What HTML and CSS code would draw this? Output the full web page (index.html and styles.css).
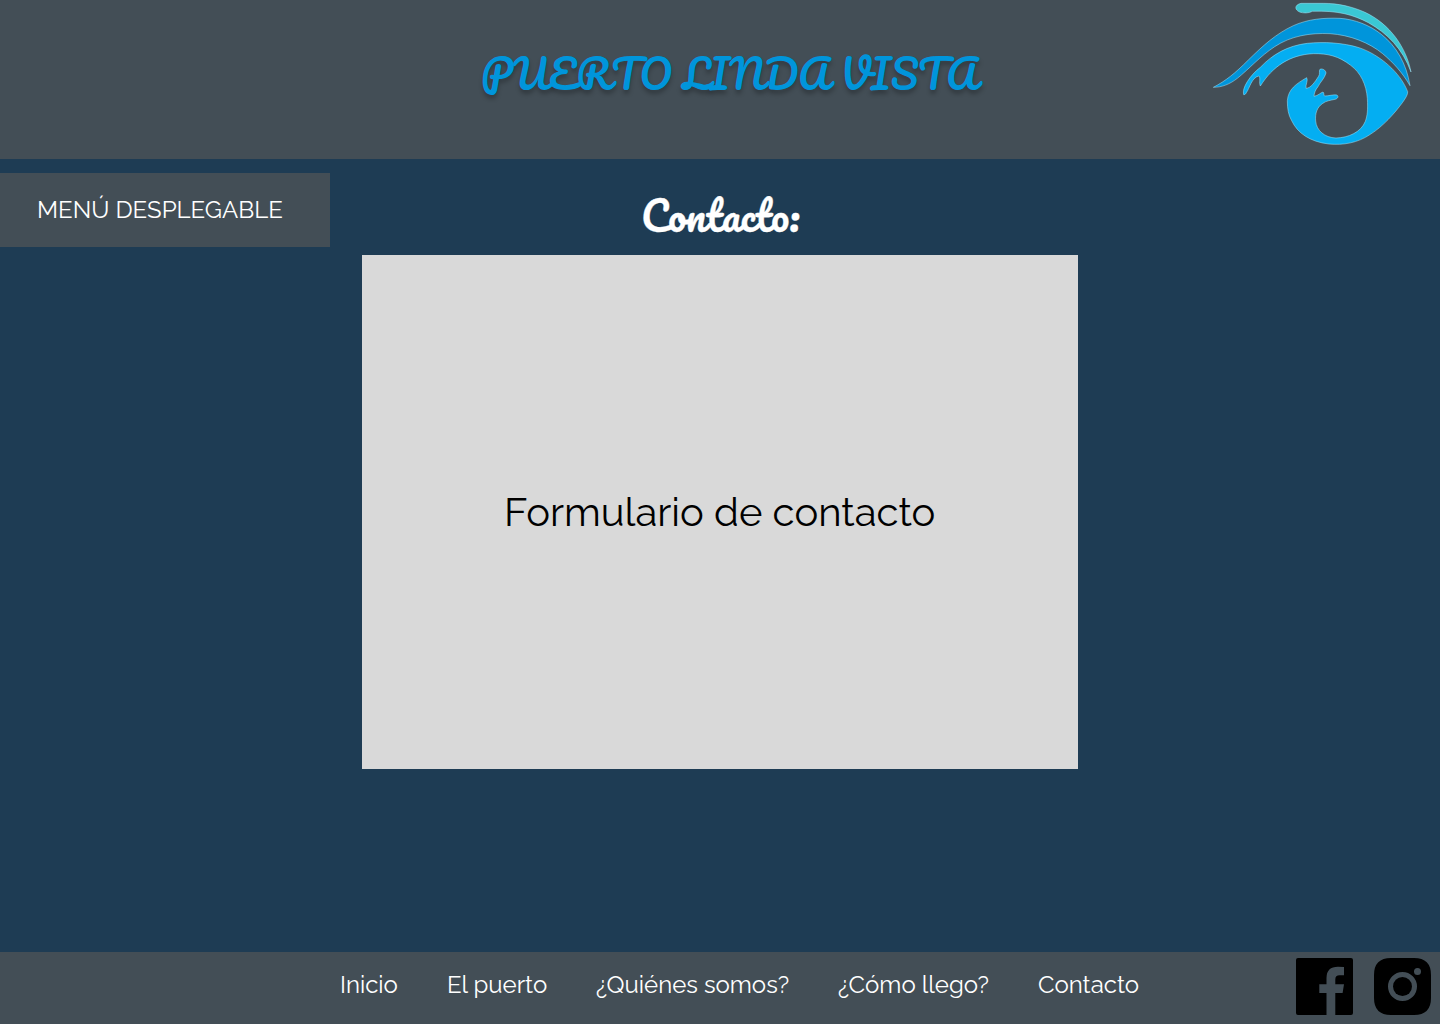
FILE: index.html
```html
<!DOCTYPE html>
<html lang="es">
<head>
<meta charset="utf-8">
<title>Puerto Linda Vista - Contacto</title>
<link rel="stylesheet" href="styles.css">
</head>
<body>
<header class="header">
  <h1 class="brand">PUERTO LINDA VISTA</h1>
  <svg class="logo" viewBox="0 0 720 477" aria-label="Puerto Linda Vista">
    <path class="brow" d="M303 10L370 10C415 10 457 20 495 37C570 72 619 143 633 216C608 146 561 99 505 68C460 44 412 31 337 34C327 40 309 40 299 36C284 30 282 15 303 10Z"/>
    <path class="lid" d="M40 262C78 242 105 220 145 180C189 137 228 101 280 77C324 57 372 53 420 55C465 58 510 76 544 103C590 140 619 190 630 257C606 216 580 188 548 161C508 128 450 105 390 101C330 98 272 108 224 140C180 169 148 206 112 235C89 253 65 262 40 262Z"/>
    <path class="eye" fill-rule="evenodd" d="M131 284C125 264 150 226 181 202C217 164 262 137 322 130C370 125 430 128 477 143C540 164 602 219 623 275C624 283 617 294 608 307C583 341 549 379 511 403C473 429 430 436 386 432C330 425 293 400 275 362C265 345 262 326 262 302C265 267 288 252 320 233C325 241 316 255 318 265C333 264 344 247 355 230C362 222 355 211 361 207C367 206 377 209 378 219C374 235 360 247 354 260C346 269 342 281 342 289C354 287 362 278 369 276C374 279 369 285 374 288C386 288 400 283 410 285C417 288 414 296 405 298C392 301 378 302 367 311C351 322 345 340 347 363C349 391 374 413 408 414C445 413 483 397 496 364C502 347 504 330 502 295C499 254 482 218 452 196C417 168 381 160 340 161C270 164 218 199 181 258C176 248 183 232 176 228C155 233 149 264 139 278C137 282 135 284 131 284Z"/>
  </svg>
</header>
<main class="main">
  <button class="menu">MENÚ DESPLEGABLE</button>
  <section class="contact">
    <h2 class="title">Contacto:</h2>
    <div class="form">Formulario de contacto</div>
  </section>
</main>
<footer class="footer">
  <nav class="nav">
    <a class="link">Inicio</a>
    <a class="link">El puerto</a>
    <a class="link">¿Quiénes somos?</a>
    <a class="link">¿Cómo llego?</a>
    <a class="link">Contacto</a>
  </nav>
  <div class="social">
    <svg class="icon" viewBox="0 0 57 57" aria-label="Facebook"><path d="M2 0H55Q57 0 57 2V55Q57 57 55 57H39.300V35H46.600L48 26.300H39.300V21.500Q39.300 17.300 43.500 17.300H48V9Q45.500 8.700 42 8.700Q30.500 8.700 30.500 20V26.300H23.300V35H30.500V57H2Q0 57 0 55V2Q0 0 2 0Z"/></svg>
    <svg class="icon" viewBox="0 0 57 57" aria-label="Instagram"><path fill-rule="evenodd" d="M17 0H40Q57 0 57 17V40Q57 57 40 57H17Q0 57 0 40V17Q0 0 17 0ZM28.500 14A14.500 14.500 0 1 0 28.500 43A14.500 14.500 0 1 0 28.500 14ZM43.500 10A3.500 3.500 0 1 0 43.500 17A3.500 3.500 0 1 0 43.500 10Z"/><circle cx="28.500" cy="28.500" r="9.500"/></svg>
  </div>
</footer>
</body>
</html>
```
FILE: styles.css
```css
* { box-sizing: border-box; margin: 0; padding: 0; }
body {
  display: flex;
  flex-direction: column;
  height: 1024px;
  overflow: hidden;
  background: #1e3c54;
  color: #fff;
  font-family: Raleway, Lato, sans-serif;
}
.header {
  display: grid;
  grid-template-columns: 481px 1fr 240px;
  height: 159px;
  background: #434e56;
}
.brand {
  grid-column: 2;
  padding-top: 43px;
  font: 400 40px/60px Pacifico, cursive;
  color: #0095db;
  text-shadow: 0 4px 4px rgba(0, 0, 0, .25);
  white-space: nowrap;
}
.logo { grid-column: 3; width: 240px; height: 159px; }
.brow { fill: #3ac8d4; }
.lid { fill: #0095db; }
.eye { fill: #04aef2; }
.logo path { stroke: #a5e4f8; stroke-width: 1.5; }
.main {
  flex: 1;
  display: grid;
  grid-template-columns: 330px 716px;
  column-gap: 32px;
  align-items: start;
}
.menu {
  height: 74px;
  margin-top: 14px;
  padding-left: 37px;
  border: 0;
  background: #434e56;
  color: #fff;
  font: 400 24px/28px Raleway, Lato, sans-serif;
  text-align: left;
  white-space: nowrap;
}
.title {
  height: 96px;
  padding: 26px 0 0 279px;
  font: 400 40px/60px Pacifico, cursive;
  -webkit-text-stroke: .3px #fff;
  white-space: nowrap;
}
.form {
  display: flex;
  align-items: center;
  height: 514px;
  padding: 0 0 2px 142px;
  background: #d9d9d9;
  color: #000;
  font-size: 40px;
  white-space: nowrap;
}
.footer {
  display: flex;
  justify-content: space-between;
  height: 72px;
  padding: 6px 9px 0 340px;
  background: #434e56;
}
.nav {
  display: grid;
  grid-template-columns: 107px 149px 242px 200px 110px;
  padding-top: 13px;
  font-size: 24px;
  line-height: 28px;
  white-space: nowrap;
}
.social { display: flex; gap: 21px; }
.icon { width: 57px; height: 57px; }
```
